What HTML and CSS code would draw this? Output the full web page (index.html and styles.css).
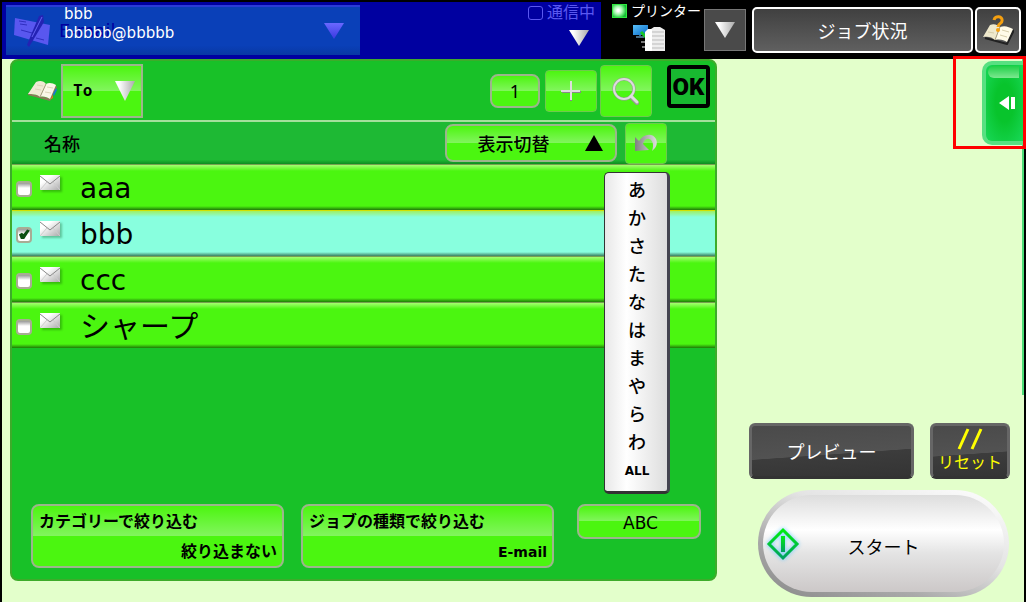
FILE: index.html
```html
<!DOCTYPE html>
<html lang="ja">
<head>
    <meta charset="UTF-8">
    <meta name="viewport" content="width=device-width, initial-scale=1.0">
    <title>アドレス帳</title>
    <link rel="stylesheet" href="styles.css">
</head>
<body>
    <svg class="defs" width="0" height="0" aria-hidden="true">
        <defs>
            <linearGradient id="silver" x1="0" y1="0" x2="1" y2="0">
                <stop offset="0.2" stop-color="#fff"/>
                <stop offset="1" stop-color="#aaa"/>
            </linearGradient>
            <linearGradient id="steel" x1="0" y1="0" x2="1" y2="0">
                <stop offset="0" stop-color="#808080"/>
                <stop offset="1" stop-color="#ddd"/>
            </linearGradient>
            <linearGradient id="violet" x1="0" y1="0" x2="0" y2="1">
                <stop offset="0" stop-color="#6a68ff"/>
                <stop offset="1" stop-color="#3a38e0"/>
            </linearGradient>
            <linearGradient id="go" x1="0" y1="0" x2="0" y2="1">
                <stop offset="0" stop-color="#00ee10"/>
                <stop offset="1" stop-color="#00a060"/>
            </linearGradient>
            <linearGradient id="paper" x1="0" y1="0" x2="1" y2="1">
                <stop offset="0.3" stop-color="#fff"/>
                <stop offset="1" stop-color="#aaa"/>
            </linearGradient>
            <linearGradient id="screen" x1="0" y1="0" x2="1" y2="1">
                <stop offset="0" stop-color="#58c0f8"/>
                <stop offset="1" stop-color="#0868c8"/>
            </linearGradient>
            <symbol id="down" viewBox="0 0 20 16">
                <path d="M0 0H20L10 16Z"/>
            </symbol>
            <symbol id="book" viewBox="0 0 30 22">
                <path d="M0 15 22 21 29 7 27 5 21 18 0 13Z" fill="#8a7a58"/>
                <path d="M25 14 28 8 29 10 26 16Z" fill="#187ad0"/>
                <path d="M22 20 25 15 25 18Z" fill="#e07020"/>
                <path d="M8 2C12 0 16 1 18 4L12 17C9 14 4 14 0 14Z" fill="#efead4"/>
                <path d="M18 4C21 2 25 3 28 5L22 19C19 17 15 16 12 17Z" fill="#faf7e8"/>
                <path d="M9 5 15 6M7 9 13 10M19 7 25 8M17 12 23 13" fill="none" stroke="#ddd6ba"/>
                <path d="M18 4 12 17" fill="none" stroke="#a89e80"/>
            </symbol>
            <symbol id="envelope" viewBox="0 0 20 15">
                <rect width="20" height="15" fill="url(#paper)"/>
                <path d="M0 1 10 9 20 1" fill="none" stroke="#888"/>
                <path d="M0 15 7 7M20 15 13 7" fill="none" stroke="#ccc"/>
            </symbol>
        </defs>
    </svg>

    <header class="topbar">
        <div class="account">
            <button class="destination">
                <svg class="pen-icon" width="36" height="34" viewBox="0 0 36 34" aria-hidden="true">
                    <path d="M1 4 36 11 34 31 0 21Z" fill="#5957ef"/>
                    <path d="M5 7 12 8M6 10 13 11M7 16 18 19 23 14M22 24 30 26" fill="none" stroke="#302ec0"/>
                    <path d="M25 2 29 1 30 8 21 23 15 33 13 31 17 21Z" fill="#2422b4"/>
                    <path d="M28 3 18 23" stroke="#6664f4"/>
                </svg>
                <span class="mode">E-mail</span>
                <span class="address"><span>bbb</span><span>bbbbb@bbbbb</span></span>
                <svg class="arrow" width="20" height="16" fill="url(#violet)" aria-hidden="true"><use href="#down"/></svg>
            </button>
            <div class="comm">
                <p><span class="lamp-off"></span>通信中</p>
                <svg width="20" height="16" fill="url(#silver)" aria-hidden="true"><use href="#down"/></svg>
            </div>
        </div>
        <div class="printer">
            <p><span class="lamp-on"></span>プリンター</p>
            <svg width="34" height="28" viewBox="0 0 34 28" aria-hidden="true">
                <rect x="1" y="1" width="15" height="10" fill="url(#screen)"/>
                <path d="M8 11V13M4 13H12" stroke="#466a80" stroke-width="2"/>
                <path d="M9 17H14V19H9ZM10 22H15V24H10Z" fill="#777"/>
                <path d="M9 8 15 14 16 10" fill="none" stroke="#18c828" stroke-width="3"/>
                <path d="M19 5 22 3H28L33 6V27H19Z" fill="#eee"/>
                <path d="M13 8 16 5H20V27H13Z" fill="#fff"/>
                <path d="M20 8H32M20 12H32M20 16H32M20 20H32M20 24H32" stroke="#bbb"/>
            </svg>
        </div>
        <button class="more" aria-label="メニュー">
            <svg width="20" height="16" fill="url(#silver)" aria-hidden="true"><use href="#down"/></svg>
        </button>
        <button class="jobs">ジョブ状況</button>
        <button class="help" aria-label="ヘルプ">
            <svg width="32" height="30" viewBox="0 0 32 30" aria-hidden="true">
                <path d="M3 23 25 29 32 15" fill="none" stroke="#222" stroke-width="2"/>
                <path d="M8 10C12 8 16 10 18 12L13 25C10 22 6 21 1 22Z" fill="#efe9cc"/>
                <path d="M18 12C23 10 27 12 31 14L25 27C22 25 18 24 13 25Z" fill="#fffbe8"/>
                <path d="M6 17 12 18M20 15 27 17M18 20 25 22" fill="none" stroke="#d6cdaa"/>
                <path d="M18 12 13 25" fill="none" stroke="#a89e80"/>
                <path d="M12 5C13 0 21 1 20 6C20 9 16 8 16 12" fill="none" stroke="#f5a010" stroke-width="3"/>
                <circle cx="16" cy="15" r="2" fill="#f5a010"/>
            </svg>
        </button>
    </header>

    <main class="screen">
        <section class="panel">
            <div class="toolbar">
                <svg class="book-icon" width="30" height="22" aria-hidden="true"><use href="#book"/></svg>
                <div class="field">
                    <select class="glossy" aria-label="宛先の種類">
                        <option>To</option>
                    </select>
                    <svg width="20" height="20" viewBox="0 0 20 20" aria-hidden="true"><path d="M0 0H20L10 20Z" fill="url(#silver)"/></svg>
                </div>
                <button class="glossy count">1</button>
                <button class="glossy add" aria-label="追加">
                    <svg width="20" height="20" viewBox="0 0 20 20" aria-hidden="true">
                        <path d="M10 1V20M1 11H20" stroke="#888" stroke-width="2"/>
                        <path d="M10 0V19M0 10H19" stroke="#ddd" stroke-width="2"/>
                    </svg>
                </button>
                <button class="glossy search" aria-label="検索">
                    <svg width="28" height="28" viewBox="0 0 28 28" aria-hidden="true">
                        <circle cx="12" cy="12" r="10" fill="none" stroke="#999" stroke-width="3"/>
                        <path d="M19 20 25 26" stroke="#999" stroke-width="4" stroke-linecap="round"/>
                        <circle cx="12" cy="12" r="10" fill="none" stroke="#ddd" stroke-width="2"/>
                        <path d="M19 19 25 25" stroke="#ddd" stroke-width="3" stroke-linecap="round"/>
                    </svg>
                </button>
                <button class="ok">OK</button>
            </div>

            <div class="list-head">
                <h1>名称</h1>
                <button class="glossy switch">表示切替
                    <svg width="18" height="18" viewBox="0 0 18 18" aria-hidden="true"><path d="M9 1 18 17H0Z"/></svg>
                </button>
                <button class="glossy undo" aria-label="戻る">
                    <svg width="26" height="20" viewBox="0 0 26 20" aria-hidden="true">
                        <path d="M2 4 6 8C11 0 20 0 23 6C25 11 23 15 19 18C21 12 20 7 16 6C13 5 11 8 10 11L16 17 2 18Z" fill="url(#steel)"/>
                    </svg>
                </button>
            </div>

            <ul class="addresses">
                <li><label><input type="checkbox"><svg width="20" height="15" aria-hidden="true"><use href="#envelope"/></svg><span>aaa</span></label></li>
                <li class="selected"><label><input type="checkbox" checked><svg width="20" height="15" aria-hidden="true"><use href="#envelope"/></svg><span>bbb</span></label></li>
                <li><label><input type="checkbox"><svg width="20" height="15" aria-hidden="true"><use href="#envelope"/></svg><span>ccc</span></label></li>
                <li><label><input type="checkbox"><svg width="20" height="15" aria-hidden="true"><use href="#envelope"/></svg><span class="kana">シャープ</span></label></li>
            </ul>

            <nav class="index">
                <button>あ</button>
                <button>か</button>
                <button>さ</button>
                <button>た</button>
                <button>な</button>
                <button>は</button>
                <button>ま</button>
                <button>や</button>
                <button>ら</button>
                <button>わ</button>
                <button class="all">ALL</button>
            </nav>

            <div class="filters">
                <button class="glossy filter"><span>カテゴリーで絞り込む</span><span class="value">絞り込まない</span></button>
                <button class="glossy filter"><span>ジョブの種類で絞り込む</span><span class="value latin">E-mail</span></button>
                <button class="glossy abc">ABC</button>
            </div>
        </section>

        <aside class="side">
            <div class="callout">
                <button class="drawer" aria-label="パネルを開く">
                    <svg width="16" height="14" viewBox="0 0 16 14" aria-hidden="true"><path d="M0 7 10 0V14ZM12 1H16V13H12Z" fill="#fff"/></svg>
                </button>
            </div>
            <div class="actions">
                <button class="dark preview">プレビュー</button>
                <button class="dark reset">
                    <svg width="26" height="22" viewBox="0 0 26 22" aria-hidden="true"><path d="M2 21 11 1M15 21 24 1" stroke="#ff0" stroke-width="3"/></svg>
                    リセット
                </button>
            </div>
            <button class="start">
                <svg width="36" height="36" viewBox="0 0 36 36" aria-hidden="true">
                    <path d="M18 4 32 18 18 32 4 18Z" fill="none" stroke="url(#go)" stroke-width="3"/>
                    <rect x="16" y="10" width="4" height="16" fill="url(#go)"/>
                </svg>
                <span>スタート</span>
            </button>
        </aside>
    </main>
</body>
</html>
```
FILE: styles.css
```css
* {
    box-sizing: border-box;
}

body {
    display: flex;
    flex-direction: column;
    min-height: 100vh;
    margin: 0;
    padding: 2px 2px 0;
    background-color: #000;
    font-family: "DejaVu Sans", "Noto Sans CJK JP", sans-serif;
    font-size: 16px;
}

button, select {
    margin: 0;
    padding: 0;
    border: 0;
    color: #000;
    font-family: inherit;
    font-size: 18px;
    cursor: pointer;
}

svg {
    display: block;
    flex: none;
}

.defs {
    position: absolute;
}

p, h1, ul {
    margin: 0;
    padding: 0;
}

/* top bar */
.topbar {
    display: flex;
    align-items: center;
    height: 57px;
}

.account {
    display: flex;
    flex: 1;
    justify-content: space-between;
    align-self: stretch;
    padding: 3px 6px 3px 4px;
    background-color: #0000a0;
}

.destination {
    position: relative;
    display: flex;
    align-items: center;
    flex: 0 1 354px;
    height: 50px;
    padding: 0 16px 0 8px;
    border-top: 2px solid #2a3cd8;
    background: linear-gradient(#0a40b8 80%, #0838a4);
    color: #fff;
    font-size: 15px;
}

.address {
    display: flex;
    flex-direction: column;
    margin: 0 auto 14px 14px;
    line-height: 19px;
    text-align: left;
}

.destination span {
    z-index: 1;
}

/* current mode shows faintly behind the address */
.destination .mode {
    position: absolute;
    left: 53px;
    top: 13px;
    z-index: 0;
    color: #0000a0;
    font-size: 18px;
}

.comm {
    display: flex;
    flex-direction: column;
    align-items: flex-end;
    gap: 9px;
}

.comm svg {
    margin-right: 6px;
}

.comm p, .printer p {
    display: flex;
    align-items: center;
    gap: 4px;
    line-height: 16px;
}

.comm p {
    color: #5a58f0;
}

.lamp-off {
    width: 15px;
    height: 14px;
    border: 1px solid #5a58f0;
    border-radius: 3px;
}

.lamp-on {
    width: 15px;
    height: 14px;
    background: radial-gradient(circle at 40% 45%, #fff 10%, #a0f8a8 40%, #10c030 80%);
    border: 1px solid #30e840;
}

.printer {
    width: 103px;
    align-self: stretch;
    padding: 1px 0 0 11px;
    color: #fff;
    font-size: 14px;
}

.printer svg {
    margin: 5px 0 0 20px;
}

.more {
    display: grid;
    place-items: center;
    width: 42px;
    height: 42px;
    margin-right: 6px;
    border: 1px solid #777;
    background-color: #4a4a4a;
}

.jobs, .help {
    height: 46px;
    border: 2px solid #fff;
    border-radius: 5px;
    background: linear-gradient(#404040, #606060);
    color: #fff;
}

.jobs {
    width: 221px;
}

.help {
    display: grid;
    place-items: center;
    width: 46px;
    margin: 0 3px 0 2px;
}

.more, .jobs, .help {
    position: relative;
    top: -1px;
}

/* address book */
.screen {
    display: flex;
    flex: 1;
    background-color: #e3ffcb;
}

.panel {
    position: relative;
    display: flex;
    flex: 1;
    flex-direction: column;
    margin: 0 0 21px 8px;
    border: 2px solid #3dac2a;
    border-radius: 8px;
    background-color: #18c128;
}

.glossy {
    display: flex;
    align-items: center;
    justify-content: center;
    border: 2px solid #9db58c;
    border-radius: 8px;
    background: linear-gradient(#4cf510, #82f55e 50%, #4bf610 50%);
}

.toolbar {
    display: flex;
    align-items: center;
    height: 59px;
    padding: 0 5px 0 16px;
}

.book-icon {
    margin-right: 3px;
}

.field {
    position: relative;
    margin-right: auto;
}

.field svg {
    position: absolute;
    right: 8px;
    top: 17px;
    pointer-events: none;
}

.field select {
    appearance: none;
    width: 82px;
    height: 54px;
    padding-left: 10px;
    border-radius: 0;
    font-family: "DejaVu Sans Mono", monospace;
    font-size: 16px;
    font-weight: bold;
}

.count {
    width: 50px;
    height: 34px;
    margin-right: 5px;
    font-family: "Noto Sans", sans-serif;
}

.add, .search, .undo {
    border: 1px solid #6fca4c;
    border-radius: 4px;
}

.add {
    width: 52px;
    height: 42px;
    margin-right: 3px;
}

.search {
    width: 52px;
    height: 52px;
    margin-right: 15px;
}

.ok {
    align-self: flex-start;
    width: 43px;
    height: 43px;
    margin-top: 4px;
    border: 4px solid #000;
    border-radius: 4px;
    background-color: #18b930;
    font-family: Roboto, sans-serif;
    font-size: 24px;
    font-weight: 900;
}

.list-head {
    display: flex;
    align-items: center;
    height: 44px;
    padding: 0 48px 0 32px;
    border-top: 2px solid #a4e09c;
    background: linear-gradient(#1eb934 90%, #0e8c20);
}

.list-head h1 {
    margin-right: auto;
    font-size: 18px;
    font-weight: 500;
}

.switch {
    gap: 35px;
    width: 172px;
    height: 38px;
    padding-left: 18px;
    margin-right: 8px;
    font-weight: 500;
}

.undo {
    width: 42px;
    height: 41px;
}

.addresses {
    list-style: none;
}

.addresses li {
    height: 46px;
    border-top: 1px solid #78a050;
    background: linear-gradient(#a4ff70, #4bf610 6px, #4bf610 41px, #1f7a08 45px);
}

.addresses .selected {
    border-top-color: #d2e000;
    background: linear-gradient(#a0f060, #88ffde 6px, #88ffde 41px, #3a8060 45px);
}

.addresses label {
    display: flex;
    align-items: center;
    height: 45px;
    padding: 2px 0 0 4px;
    font-size: 28px;
}

.addresses input {
    appearance: none;
    width: 16px;
    height: 16px;
    margin: 0 8px 0 0;
    border: 2px solid #a8ac94;
    border-radius: 4px;
    background: linear-gradient(#999, #fff 5px);
}

.addresses input:checked::after {
    content: "";
    display: block;
    width: 12px;
    height: 12px;
    background-color: #0c5012;
    clip-path: polygon(8% 50%, 32% 36%, 46% 46%, 76% 8%, 98% 16%, 52% 88%, 24% 88%);
}

.addresses svg {
    align-self: flex-start;
    margin: 8px 20px 0 0;
    box-shadow: 2px 2px 2px rgba(0, 60, 0, 0.3);
}

.kana {
    font-size: 30px;
    line-height: 40px;
}

/* sits over the address list */
.index {
    position: absolute;
    top: 111px;
    right: 45px;
    display: flex;
    flex-direction: column;
    width: 66px;
    padding: 4px 0 6px 2px;
    border: 1px solid #333;
    border-right: 3px solid #444450;
    border-bottom-width: 3px;
    border-radius: 5px;
    background: linear-gradient(90deg, #e8e8e8, #fff 35%, #ddd);
}

.index button {
    height: 28px;
    background: none;
    font-weight: 500;
    line-height: 28px;
}

.index .all {
    font-size: 12px;
    font-weight: bold;
}

.filters {
    display: flex;
    margin-top: auto;
    padding: 0 14px 11px 19px;
}

.filter {
    flex: 1;
    flex-direction: column;
    align-items: stretch;
    height: 64px;
    margin-right: 17px;
    padding: 2px 5px 0 6px;
    font-size: 16px;
    font-weight: bold;
    line-height: 30px;
    text-align: left;
}

.filter .value {
    text-align: right;
}

.filter .latin {
    font-size: 14px;
}

.abc {
    width: 124px;
    height: 35px;
    margin-left: 6px;
    padding: 2px 0 0 3px;
    font-size: 17px;
}

/* right side */
.side {
    position: relative;
    display: flex;
    flex-direction: column;
    justify-content: flex-end;
    width: 307px;
    padding: 0 14px 5px 32px;
    background: linear-gradient(#4cdc78, #4cdc78) right top / 2px 336px no-repeat;
}

.callout {
    position: absolute;
    top: -3px;
    right: -2px;
    width: 73px;
    height: 93px;
    border: 3px solid #f00;
}

.drawer {
    position: absolute;
    top: 2px;
    right: 0;
    display: grid;
    place-items: center;
    width: 41px;
    height: 84px;
    padding-left: 4px;
    border: 4px solid #58e082;
    border-right: 0;
    border-radius: 10px 0 0 10px;
    background: radial-gradient(#08c42c 35%, #18d858);
}

.drawer::before {
    content: "";
    position: absolute;
    top: 1px;
    left: 2px;
    right: 4px;
    height: 12px;
    border-radius: 8px 0 0 8px;
    background: linear-gradient(#20d048, #7ce890);
}

.actions {
    display: flex;
    justify-content: space-between;
    align-items: center;
    margin-bottom: 11px;
}

.dark {
    height: 56px;
    border: 3px solid #666;
    border-bottom-color: #333;
    border-radius: 6px;
    background: linear-gradient(176deg, #303030, #444 52%, #505050 53%, #4a4a4a);
    background: linear-gradient(176deg, #4a4a4a, #525252 55%, #3c3c3c 56%, #343434);
    color: #fff;
}

.preview {
    width: 165px;
}

.reset {
    display: flex;
    flex-direction: column;
    align-items: center;
    width: 80px;
    padding-top: 2px;
    color: #ff0;
    font-size: 16px;
    line-height: 26px;
    white-space: nowrap;
}

.start {
    position: relative;
    display: grid;
    place-items: center;
    height: 107px;
    margin: 0 1px 0 9px;
    border: 5px solid transparent;
    border-radius: 54px;
    background:
        linear-gradient(#ddd, #fff 36%, #e4e4e4 60%, #ccc8c8) padding-box,
        linear-gradient(20deg, #888, #aaa 30%, #e4e4e4 60%, #fff) border-box;
}

.start svg {
    position: absolute;
    left: 2px;
    filter: drop-shadow(0 0 2px #60c8ff);
}

.start span {
    padding-top: 5px;
}
```
